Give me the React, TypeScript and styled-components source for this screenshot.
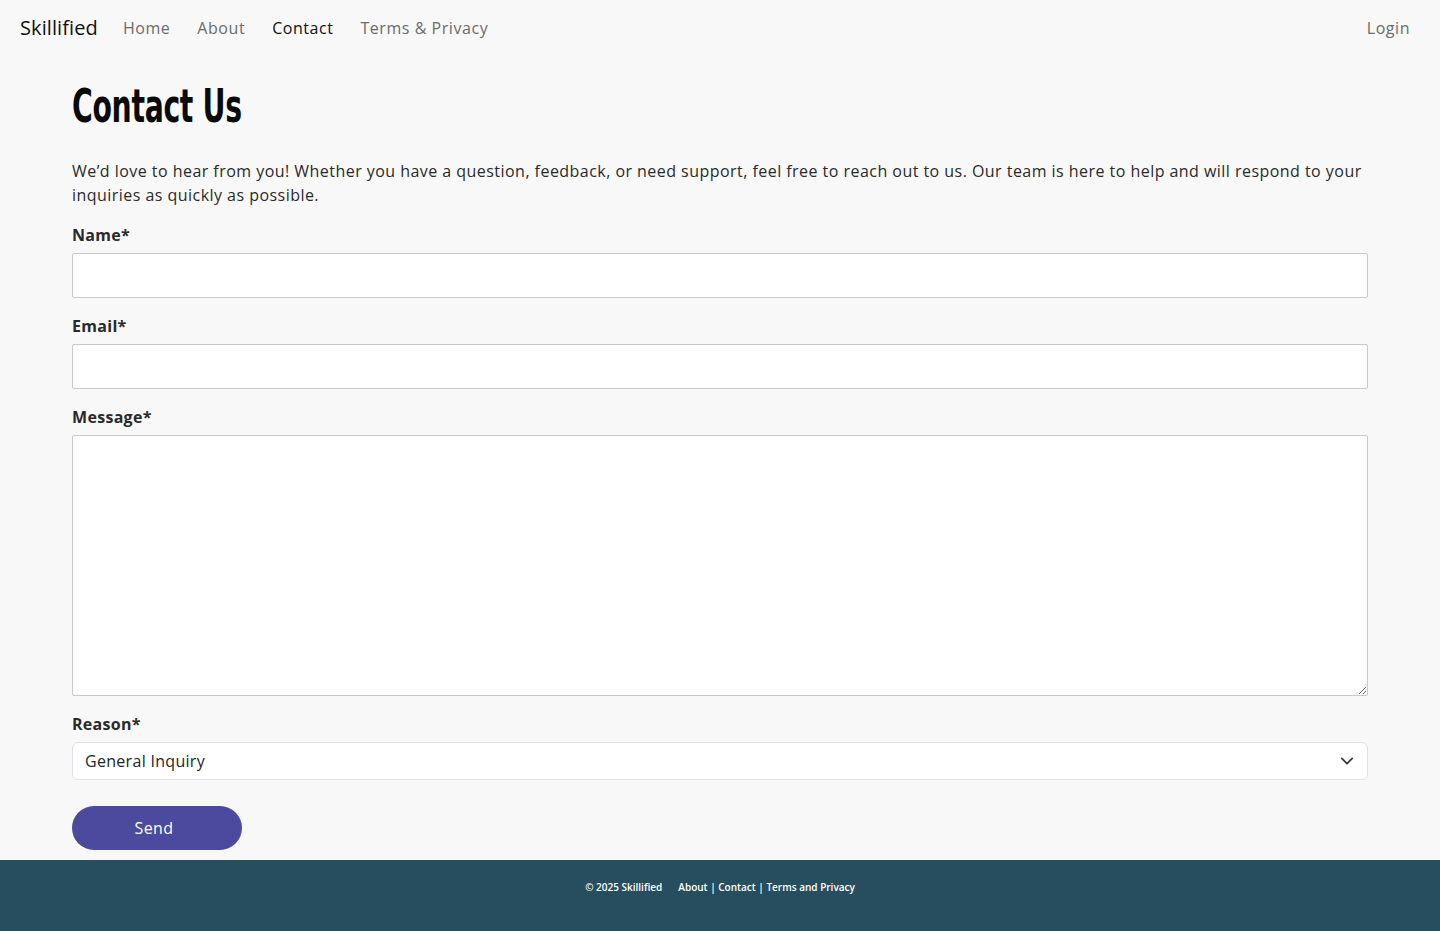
import React from "react";
import styled, { createGlobalStyle } from "styled-components";

const GlobalStyle = createGlobalStyle`
  * { box-sizing: border-box; }
  html, body { margin: 0; padding: 0; }
  body {
    background: #f8f8f9;
    font-family: "Open Sans", "Noto Sans", sans-serif;
    letter-spacing: 0.3px;
    color: #212529;
  }
`;

const Page = styled.div`
  min-height: 931px;
  display: flex;
  flex-direction: column;
`;

const Navbar = styled.nav`
  height: 55px;
  display: flex;
  align-items: center;
  padding: 0 30px 0 20px;
`;

const Brand = styled.a`
  font-size: 20px;
  color: #111;
  text-decoration: none;
  margin-right: 25px;
  letter-spacing: 0.1px;
`;

const NavList = styled.div`
  display: flex;
  gap: 27px;
  flex: 1;
`;

const NavLink = styled.a<{ $active?: boolean }>`
  font-size: 16px;
  letter-spacing: 0.55px;
  color: ${(p) => (p.$active ? "#111" : "#6b6b6b")};
  text-decoration: none;
`;

const Main = styled.main`
  flex: 1;
  width: 1296px;
  margin: 0 auto;
  padding-top: 26px;
  padding-bottom: 10px;
`;

const Title = styled.h1`
  font-family: "DejaVu Sans Condensed", "Liberation Sans", sans-serif;
  font-weight: 700;
  font-size: 47px;
  line-height: 50px;
  margin: 0 0 28px;
  color: #0a0a0a;
  letter-spacing: -0.5px;
  transform: scaleX(0.67);
  transform-origin: left center;
`;

const Intro = styled.p`
  font-size: 16px;
  line-height: 24px;
  margin: 0 0 16px;
  color: #2a2a2a;
  letter-spacing: 0.46px;
`;

const Field = styled.div`
  display: flex;
  flex-direction: column;
  margin-bottom: 16px;
`;

const Label = styled.label`
  font-size: 16px;
  font-weight: 700;
  line-height: 24px;
  margin-bottom: 6px;
  color: #2a2a2a;
`;

const TextInput = styled.input`
  height: 45px;
  border: 1px solid #c9c9c9;
  border-radius: 2px;
  background: #fff;
  padding: 10px 12px;
  font: inherit;
`;

const TextArea = styled.textarea`
  height: 261px;
  border: 1px solid #c9c9c9;
  border-radius: 2px;
  background: #fff;
  padding: 10px 12px;
  font: inherit;
  resize: vertical;
`;

const SelectWrap = styled.div`
  position: relative;
`;

const Select = styled.select`
  width: 100%;
  height: 38px;
  appearance: none;
  border: 1px solid #dee2e6;
  border-radius: 6px;
  background: #fff;
  padding: 0 36px 0 12px;
  font-family: inherit;
  letter-spacing: 0.3px;
  font-size: 16px;
  color: #212529;
`;

const Chevron = styled.svg`
  position: absolute;
  right: 14px;
  top: 12px;
  pointer-events: none;
`;

const SendButton = styled.button`
  margin-top: 10px;
  width: 170px;
  height: 44px;
  border: none;
  border-radius: 22px;
  background: #4b4a9f;
  color: #fff;
  font-family: inherit;
  letter-spacing: 0.4px;
  font-size: 16px;
  padding: 0 6px 0 0;
  cursor: pointer;
`;

const Footer = styled.footer`
  height: 71px;
  background: #264e5f;
  color: #fff;
  display: flex;
  justify-content: center;
  gap: 16px;
  padding-top: 20px;
  font-size: 10px;
  font-weight: 600;
  letter-spacing: 0;
`;

const FooterText = styled.span`
  line-height: 15px;
`;

export default function App() {
  return (
    <Page>
      <GlobalStyle />
      <Navbar>
        <Brand href="#">Skillified</Brand>
        <NavList>
          <NavLink href="#">Home</NavLink>
          <NavLink href="#">About</NavLink>
          <NavLink href="#" $active>
            Contact
          </NavLink>
          <NavLink href="#">Terms &amp; Privacy</NavLink>
        </NavList>
        <NavLink href="#">Login</NavLink>
      </Navbar>
      <Main>
        <Title>Contact Us</Title>
        <Intro>
          We’d love to hear from you! Whether you have a question, feedback, or need support, feel free to
          reach out to us. Our team is here to help and will respond to your inquiries as quickly as possible.
        </Intro>
        <Field>
          <Label>Name*</Label>
          <TextInput type="text" />
        </Field>
        <Field>
          <Label>Email*</Label>
          <TextInput type="email" />
        </Field>
        <Field>
          <Label>Message*</Label>
          <TextArea />
        </Field>
        <Field>
          <Label>Reason*</Label>
          <SelectWrap>
            <Select defaultValue="general">
              <option value="general">General Inquiry</option>
              <option value="support">Support</option>
              <option value="feedback">Feedback</option>
            </Select>
            <Chevron width="14" height="14" viewBox="0 0 16 16" fill="none">
              <path d="M2 5l6 6 6-6" stroke="#343a40" strokeWidth="2" strokeLinecap="round" strokeLinejoin="round" />
            </Chevron>
          </SelectWrap>
        </Field>
        <SendButton>Send</SendButton>
      </Main>
      <Footer>
        <FooterText>© 2025 Skillified</FooterText>
        <FooterText>About | Contact | Terms and Privacy</FooterText>
      </Footer>
    </Page>
  );
}
